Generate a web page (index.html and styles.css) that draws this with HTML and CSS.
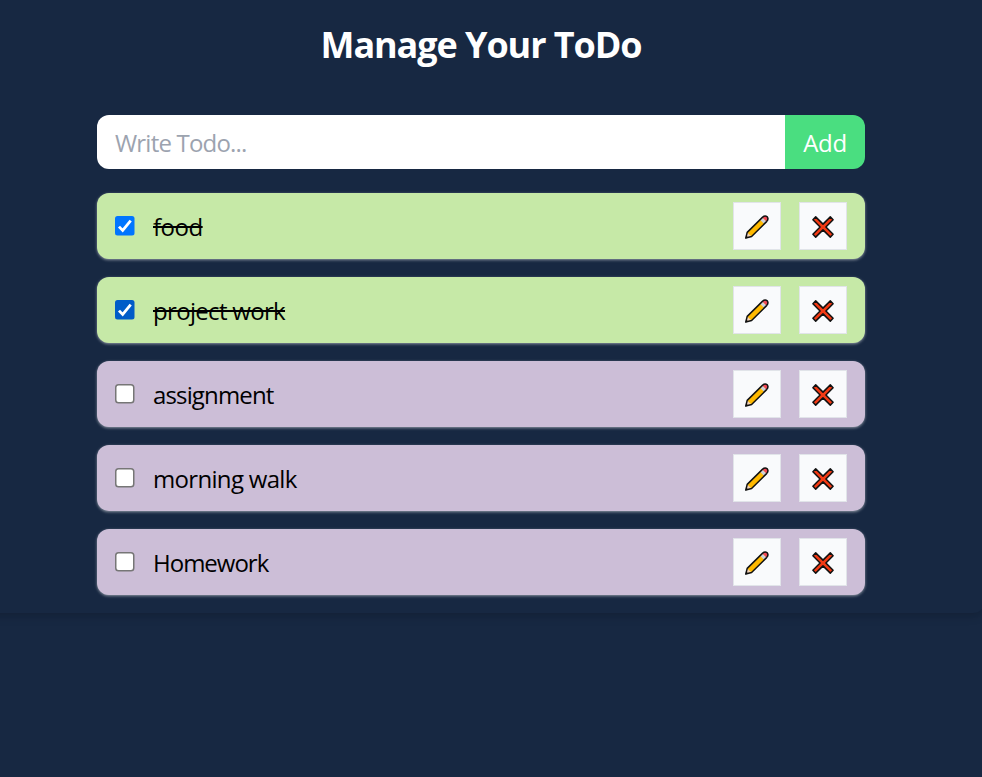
FILE: index.html
```html
<!DOCTYPE html>
<html lang="en">
<head>
<meta charset="utf-8">
<title>Manage Your ToDo</title>
<link rel="stylesheet" href="styles.css">
</head>
<body>
<svg class="defs" width="0" height="0" aria-hidden="true">
  <symbol id="pencil" viewBox="0 0 26 26">
    <path d="M1.8 24 3.2 18.4 18.4 3.4Q20.8 1.1 23.3 2.8 24.9 5.2 22.6 7.6L7.6 22.5Z" fill="#ffb900"/>
    <path d="M1.8 24 3.2 18.4 7.6 22.5Z" fill="#f3d3b8"/>
    <path d="M16 5.8 18.4 3.4 22.6 7.6 20.2 10Z" fill="#cfd1d8"/>
    <path d="M18.4 3.4Q20.8 1.1 23.3 2.8 24.9 5.2 22.6 7.6Z" fill="#f04858"/>
    <path d="M1.8 24 3.2 18.4 18.4 3.4Q20.8 1.1 23.3 2.8 24.9 5.2 22.6 7.6L7.6 22.5Z" fill="none" stroke="#111" stroke-width="1.5" stroke-linejoin="round"/>
    <path d="M1.4 24.4 2.2 21.6 4.4 23.6Z" fill="#111"/>
  </symbol>
  <symbol id="cross" viewBox="0 0 24 24">
    <path d="M4.7 1.9 12 9.1 19.3 1.9 22.1 4.7 14.9 12 22.1 19.3 19.3 22.1 12 14.9 4.7 22.1 1.9 19.3 9.1 12 1.9 4.7Z" fill="#f43a14" stroke="#111" stroke-width="1.5" stroke-linejoin="round"/>
  </symbol>
</svg>
<main class="panel">
  <h1 class="title">Manage Your ToDo</h1>
  <form class="entry">
    <div class="field">Write Todo...</div>
    <button class="add" type="button">Add</button>
  </form>
  <ul class="list">
    <li class="item done">
      <svg class="check" viewBox="0 0 20 20"><rect class="box" width="19.5" height="19.5" rx="2.5"/><path class="tick" d="M4 10.6 7.7 14.5 15.7 4.7"/></svg>
      <span class="label food">food</span>
      <button class="tool"><svg class="pencil"><use href="#pencil"/></svg></button>
      <button class="tool"><svg class="cross"><use href="#cross"/></svg></button>
    </li>
    <li class="item done hovered">
      <svg class="check" viewBox="0 0 20 20"><rect class="box" width="19.5" height="19.5" rx="2.5"/><path class="tick" d="M4 10.6 7.7 14.5 15.7 4.7"/></svg>
      <span class="label project">project work</span>
      <button class="tool"><svg class="pencil"><use href="#pencil"/></svg></button>
      <button class="tool"><svg class="cross"><use href="#cross"/></svg></button>
    </li>
    <li class="item">
      <svg class="check" viewBox="0 0 20 20"><rect class="empty" x=".75" y=".75" width="18" height="18" rx="2.8"/></svg>
      <span class="label assignment">assignment</span>
      <button class="tool"><svg class="pencil"><use href="#pencil"/></svg></button>
      <button class="tool"><svg class="cross"><use href="#cross"/></svg></button>
    </li>
    <li class="item">
      <svg class="check" viewBox="0 0 20 20"><rect class="empty" x=".75" y=".75" width="18" height="18" rx="2.8"/></svg>
      <span class="label walk">morning walk</span>
      <button class="tool"><svg class="pencil"><use href="#pencil"/></svg></button>
      <button class="tool"><svg class="cross"><use href="#cross"/></svg></button>
    </li>
    <li class="item">
      <svg class="check" viewBox="0 0 20 20"><rect class="empty" x=".75" y=".75" width="18" height="18" rx="2.8"/></svg>
      <span class="label homework">Homework</span>
      <button class="tool"><svg class="pencil"><use href="#pencil"/></svg></button>
      <button class="tool"><svg class="cross"><use href="#cross"/></svg></button>
    </li>
  </ul>
</main>
</body>
</html>
```

FILE: styles.css
```css
* { box-sizing: border-box; }
html, body { margin: 0; height: 100%; overflow: hidden; background: #172842; }
body { font: 400 24px/36px "Open Sans", "Noto Sans", sans-serif; }
.defs { display: none; }
.panel {
  width: 1008px;
  height: 613px;
  margin-left: -23px;
  padding: 18px 120px 0;
  border-radius: 0 0 12px 12px;
  box-shadow: 0 6px 9px -1.5px rgba(0, 0, 0, .1), 0 3px 6px -3px rgba(0, 0, 0, .1);
}
.title {
  margin: 0 0 43px;
  color: #fff;
  font-size: 36px;
  line-height: 54px;
  font-weight: 700;
  text-align: center;
  letter-spacing: -1.08px;
}
.entry { display: flex; height: 54px; margin: 0 0 24px; }
.field {
  flex: 1;
  padding: 10px 18px 0;
  border-radius: 12px 0 0 12px;
  background: #fff;
  color: #9ca3af;
  letter-spacing: -.8px;
}
.add {
  width: 80px;
  padding: 2px 0 0;
  border: 0;
  border-radius: 0 12px 12px 0;
  background: #4ade80;
  color: #fff;
  font: inherit;
  letter-spacing: -.3px;
}
.list { display: flex; flex-direction: column; gap: 18px; margin: 0; padding: 0; list-style: none; }
.item {
  display: flex;
  align-items: center;
  gap: 18px;
  height: 66px;
  padding: 0 18px;
  border-radius: 12px;
  background: #ccbed7;
  box-shadow: 0 1px 3px rgba(255, 255, 255, .5);
  color: #000;
}
.done { background: #c6e9a7; }
.check { width: 20px; height: 20px; }
.box { fill: #0075ff; }
.hovered .box { fill: #005cc8; }
.tick { fill: none; stroke: #fff; stroke-width: 2.8; }
.empty { fill: #fff; stroke: #767676; stroke-width: 1.5; }
.label { flex: 1; padding-top: 1px; }
.food { letter-spacing: -.5px; }
.project { letter-spacing: -.68px; }
.assignment { letter-spacing: -.85px; }
.walk { letter-spacing: -.68px; }
.homework { letter-spacing: -1px; }
.done .label { text-decoration: line-through; text-decoration-thickness: 2px; }
.tool {
  display: flex;
  align-items: center;
  justify-content: center;
  width: 48px;
  height: 48px;
  padding: 2px 0 0;
  border: 1.5px solid #e1e4e9;
  background: #f9fafc;
}
.pencil { width: 26px; height: 26px; }
.cross { width: 24px; height: 24px; }
```
